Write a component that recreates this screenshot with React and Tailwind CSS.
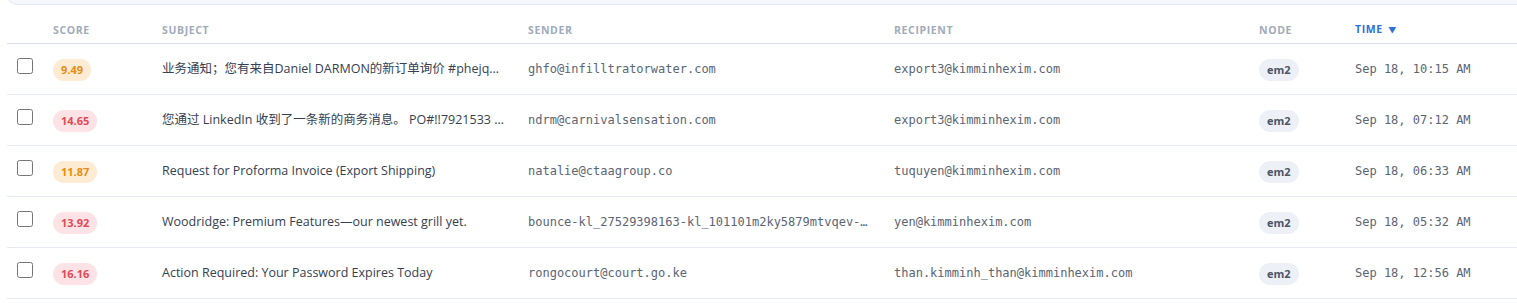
import React from "react";

const rows = [
  { score: "9.49", tone: "amber", subject: "业务通知；您有来自Daniel DARMON的新订单询价 #phejqkz 询价编号 PO-2025-0918", sender: "ghfo@infilltratorwater.com", recipient: "export3@kimminhexim.com", node: "em2", time: "Sep 18, 10:15 AM" },
  { score: "14.65", tone: "red", subject: "您通过 LinkedIn 收到了一条新的商务消息。 PO#!!7921533 请查收附件", sender: "ndrm@carnivalsensation.com", recipient: "export3@kimminhexim.com", node: "em2", time: "Sep 18, 07:12 AM" },
  { score: "11.87", tone: "amber", subject: "Request for Proforma Invoice (Export Shipping)", sender: "natalie@ctaagroup.co", recipient: "tuquyen@kimminhexim.com", node: "em2", time: "Sep 18, 06:33 AM" },
  { score: "13.92", tone: "red", subject: "Woodridge: Premium Features\u2014our newest grill yet.", sender: "bounce-kl_27529398163-kl_101101m2ky5879mtvqev-kl@klaviyomail.com", recipient: "yen@kimminhexim.com", node: "em2", time: "Sep 18, 05:32 AM" },
  { score: "16.16", tone: "red", subject: "Action Required: Your Password Expires Today", sender: "rongocourt@court.go.ke", recipient: "than.kimminh_than@kimminhexim.com", node: "em2", time: "Sep 18, 12:56 AM" },
];

const sans = { fontFamily: '"Open Sans", "Noto Sans CJK SC", sans-serif' };
const mono = { fontFamily: '"DejaVu Sans Mono", monospace' };

export default function App() {
  return (
    <div className="w-[1517px] h-[303px] bg-white overflow-hidden pl-[7px]">
      <div className="-mt-[10px] h-[15px] rounded-bl-[10px] border-b border-l border-[#e3e8f0] bg-[#f4f7fb]" />
      <table className="w-full table-fixed border-collapse" style={sans}>
        <colgroup>
          <col className="w-[34px]" />
          <col className="w-[109px]" />
          <col className="w-[366px]" />
          <col className="w-[366px]" />
          <col className="w-[365px]" />
          <col className="w-[96px]" />
          <col />
        </colgroup>
        <thead>
          <tr className="h-[38px] border-b border-[#d9e0e9] text-left text-[10.5px] font-bold uppercase leading-[14px] tracking-[0.06em] text-[#a0abbb]">
            <th className="pt-[12px] pb-0" />
            <th className="px-3 pt-[12px] pb-0 font-bold">Score</th>
            <th className="px-3 pt-[12px] pb-0 font-bold">Subject</th>
            <th className="px-3 pt-[12px] pb-0 font-bold">Sender</th>
            <th className="px-3 pt-[12px] pb-0 font-bold">Recipient</th>
            <th className="px-3 pt-[12px] pb-0 font-bold">Node</th>
            <th className="px-3 pt-[12px] pb-0 font-bold text-[#2f6fdc]">
              Time <span className="ml-[2px] text-[8px]">▼</span>
            </th>
          </tr>
        </thead>
        <tbody>
          {rows.map((r, i) => (
            <tr key={i} className="h-[51px] border-b border-[#e6ebf2]">
              <td className="pl-[10px] align-middle">
                <input type="checkbox" className="m-0 block h-4 w-4 -translate-y-[3px]" />
              </td>
              <td className="px-3 align-middle">
                <span
                  className={
                    r.tone === "amber"
                      ? "inline-flex h-[22px] items-center rounded-full bg-[#fdebd4] px-[8px] text-[11px] font-bold text-[#e48f12]"
                      : "inline-flex h-[22px] items-center rounded-full bg-[#fde3e5] px-[8px] text-[11px] font-bold text-[#e24a55]"
                  }
                >
                  {r.score}
                </span>
              </td>
              <td className="px-3 align-middle">
                <div className="truncate pt-[2px] text-[12.5px] text-[#354152]">{r.subject}</div>
              </td>
              <td className="px-3 align-middle">
                <div className="truncate text-[12px] text-[#5b6575]" style={mono}>{r.sender}</div>
              </td>
              <td className="px-3 align-middle">
                <div className="truncate text-[12px] text-[#5b6575]" style={mono}>{r.recipient}</div>
              </td>
              <td className="px-3 align-middle">
                <span className="inline-flex h-[22px] items-center rounded-full bg-[#edf1f7] px-[8px] text-[11px] font-bold text-[#4a5566]">
                  {r.node}
                </span>
              </td>
              <td className="px-3 align-middle">
                <div className="truncate text-[12px] text-[#5b6575]" style={mono}>{r.time}</div>
              </td>
            </tr>
          ))}
        </tbody>
      </table>
    </div>
  );
}
